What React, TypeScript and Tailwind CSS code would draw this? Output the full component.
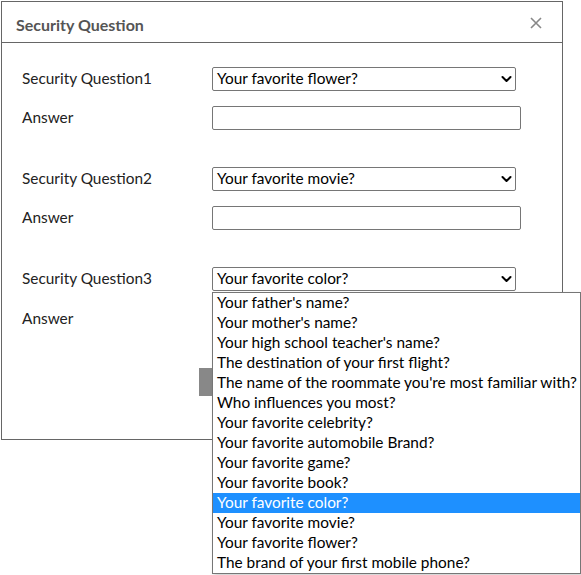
import React from 'react'

const options = [
  "Your father's name?",
  "Your mother's name?",
  "Your high school teacher's name?",
  'The destination of your first flight?',
  "The name of the roommate you're most familiar with?",
  'Who influences you most?',
  'Your favorite celebrity?',
  'Your favorite automobile Brand?',
  'Your favorite game?',
  'Your favorite book?',
  'Your favorite color?',
  'Your favorite movie?',
  'Your favorite flower?',
  'The brand of your first mobile phone?',
]

function Chevron() {
  return (
    <svg width="11" height="8" viewBox="0 0 11 8" className="text-black">
      <path d="M1.5 2l4 4 4-4" fill="none" stroke="currentColor" strokeWidth="2" strokeLinecap="round" strokeLinejoin="round" />
    </svg>
  )
}

function FakeSelect({ value }: { value: string }) {
  return (
    <div className="flex h-[24px] w-[304px] items-center justify-between rounded-[2px] border border-[#767676] bg-white pb-[1px] pl-[4px] pr-[3px] text-[15.4px] text-black">
      <span>{value}</span>
      <Chevron />
    </div>
  )
}

function QuestionGroup({ n, value }: { n: number; value: string }) {
  return (
    <div className="flex flex-col gap-[15px]">
      <div className="flex items-center">
        <span className="w-[190px] pb-[1px] text-[15.4px] text-[#222]">Security Question{n}</span>
        <FakeSelect value={value} />
      </div>
      <div className="flex items-center">
        <span className="w-[190px] pb-[1px] text-[15.4px] text-[#222]">Answer</span>
        <div className="h-[24px] w-[309px] rounded-[2px] border border-[#767676] bg-white" />
      </div>
    </div>
  )
}

export default function App() {
  return (
    <div className="relative h-[575px] w-[581px] overflow-hidden bg-white" style={{ fontFamily: 'Lato, "Noto Sans", sans-serif' }}>
      <div className="ml-[1px] mt-[1px] h-[439px] w-[562px] border border-[#666] bg-white">
        <div className="flex h-[41px] items-center justify-between border-b border-[#666] pl-[14px] pr-[20px] pt-[5px]">
          <span className="text-[16px] font-bold text-[#555]">Security Question</span>
          <svg width="12" height="12" viewBox="0 0 12 12" className="-mt-[4px]">
            <path d="M1 1l10 10M11 1L1 11" stroke="#888" strokeWidth="1.6" />
          </svg>
        </div>
        <div className="flex flex-col gap-[37px] pl-[20px] pt-[24px]">
          <QuestionGroup n={1} value="Your favorite flower?" />
          <QuestionGroup n={2} value="Your favorite movie?" />
          <QuestionGroup n={3} value="Your favorite color?" />
        </div>
        <div className="mt-[37px] flex justify-center pr-[1px]">
          <div className="h-[28px] w-[166px] bg-[#888]" />
        </div>
      </div>

      <div className="absolute left-[212px] top-[292px] w-[369px] border border-[#767676] bg-white shadow-[2px_2px_4px_rgba(0,0,0,0.2)]">
        {options.map((o) => (
          <div
            key={o}
            className={
              o === 'Your favorite color?'
                ? 'h-[20px] whitespace-nowrap bg-[#1e90ff] pl-[4px] text-[15.4px] leading-[19px] text-white'
                : 'h-[20px] whitespace-nowrap pl-[4px] text-[15.4px] leading-[19px] text-black'
            }
          >
            {o}
          </div>
        ))}
      </div>
    </div>
  )
}
